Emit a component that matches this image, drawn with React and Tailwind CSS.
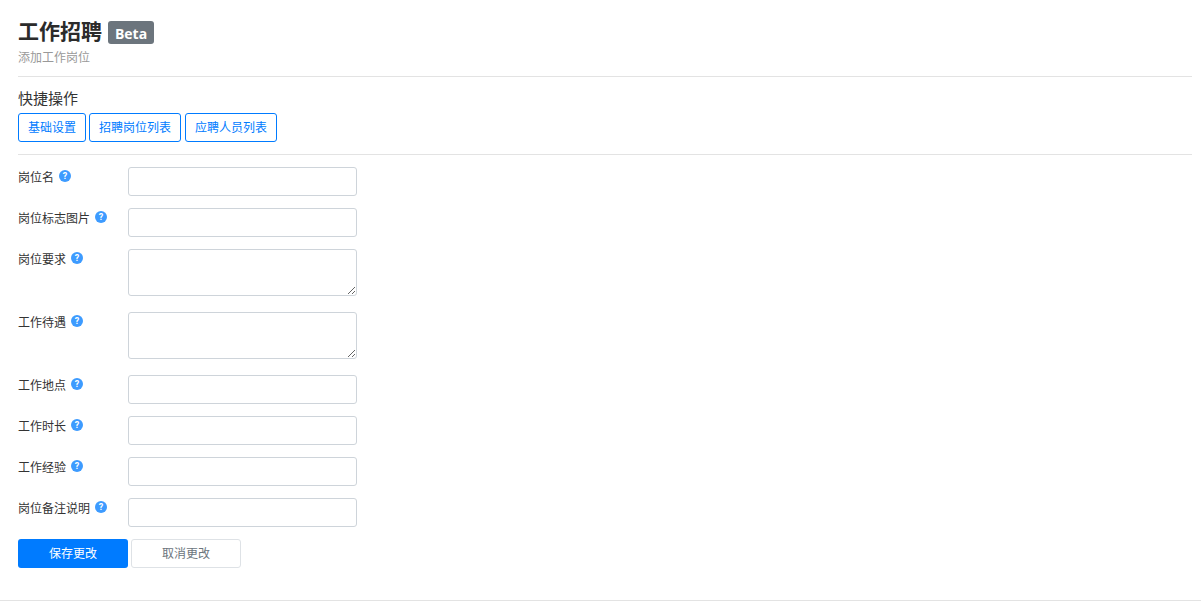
const FONT = "font-['Roboto','Noto_Sans_CJK_SC',sans-serif]";

function HelpIcon() {
  return (
    <span className="flex h-3 w-3 shrink-0 items-center justify-center rounded-full bg-[#3d9bff] text-[9px] font-bold leading-none text-white">
      ?
    </span>
  );
}

function Field({ label, gap, area }) {
  return (
    <div className={`flex ${gap}`}>
      <div className="flex w-[110px] items-start gap-[5px] pt-[2px] text-[12px] leading-[18px] text-[#333]">
        <span>{label}</span>
        <span className="pt-[1px]">
          <HelpIcon />
        </span>
      </div>
      {area ? (
        <textarea className="block h-[47px] w-[229px] rounded-[3px] border border-[#ced4da] bg-white" />
      ) : (
        <input
          type="text"
          className="block h-[29px] w-[229px] rounded-[3px] border border-[#ced4da] bg-white"
        />
      )}
    </div>
  );
}

const quickLinks = [
  { text: "基础设置", space: "" },
  { text: "招聘岗位列表", space: "ml-[3px]" },
  { text: "应聘人员列表", space: "ml-[4px]" },
];

export default function App() {
  return (
    <main className={`${FONT} h-[601px] overflow-hidden bg-white`}>
      <div className="h-[600px] pl-[18px] pr-[9px]">
        <div className="flex h-[44px] items-end">
          <h1 className="mb-[-1px] text-[21px] font-bold leading-[26px] text-[#2b2b2b]">
            工作招聘
          </h1>
          <span className="ml-[6px] flex h-[23px] w-[46px] items-center justify-center rounded-[3px] bg-[#6c757d] pt-[1px] font-['Open_Sans',sans-serif] text-[14px] font-bold text-white">
            Beta
          </span>
        </div>
        <p className="mt-[5px] pt-[1px] text-[12px] leading-[17px] text-[#999]">
          添加工作岗位
        </p>
        <hr className="mt-[9px] border-[#e3e3e3]" />
        <p className="mt-[12px] text-[15px] leading-[20px] text-[#333]">
          快捷操作
        </p>
        <div className="mt-[4px] flex">
          {quickLinks.map((q) => (
            <button
              key={q.text}
              type="button"
              className={`${q.space} h-[29px] rounded-[3px] border border-[#007bff] bg-white px-[9px] text-[12px] text-[#007bff]`}
            >
              {q.text}
            </button>
          ))}
        </div>
        <hr className="mt-[12px] border-[#e3e3e3]" />
        <form className="mt-[12px]">
          <Field label="岗位名" gap="mb-[12px]" />
          <Field label="岗位标志图片" gap="mb-[12px]" />
          <Field label="岗位要求" gap="mb-[16px]" area />
          <Field label="工作待遇" gap="mb-[16px]" area />
          <Field label="工作地点" gap="mb-[12px]" />
          <Field label="工作时长" gap="mb-[12px]" />
          <Field label="工作经验" gap="mb-[12px]" />
          <Field label="岗位备注说明" gap="mb-[12px]" />
          <div className="flex gap-[3px]">
            <button
              type="button"
              className="h-[29px] w-[110px] rounded-[3px] bg-[#007bff] text-[12px] text-white"
            >
              保存更改
            </button>
            <button
              type="button"
              className="h-[29px] w-[110px] rounded-[3px] border border-[#dee2e6] bg-white text-[12px] text-[#6c757d]"
            >
              取消更改
            </button>
          </div>
        </form>
      </div>
      <hr className="border-[#e3e3e3]" />
    </main>
  );
}
